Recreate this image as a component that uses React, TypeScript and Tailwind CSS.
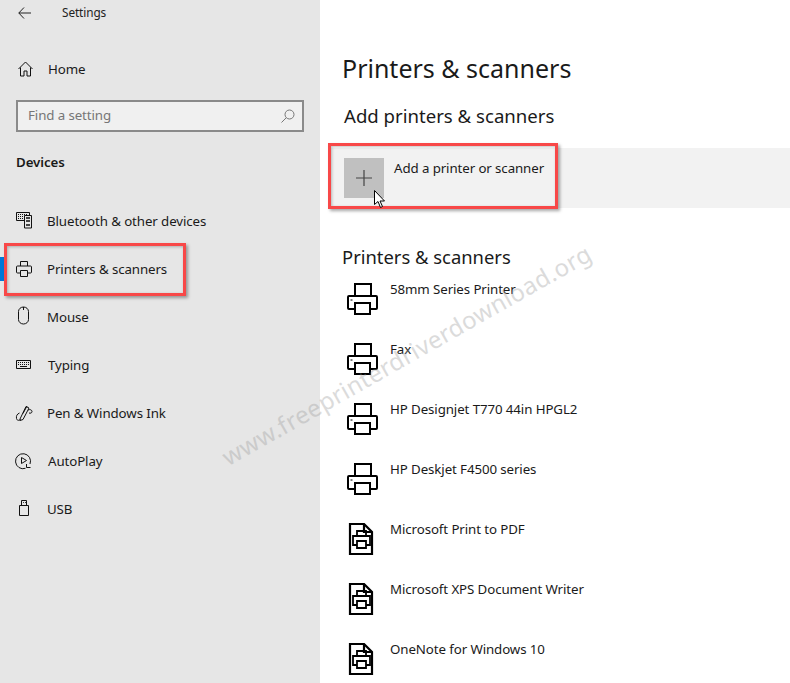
const FONT = "font-['Noto_Sans','Open_Sans',sans-serif]";

function PrinterIcon() {
  return (
    <svg className="mt-2 ml-1 shrink-0" width="32" height="32" viewBox="0 0 32 32" fill="none" stroke="#000" strokeWidth="2">
      <path d="M9 13V1h16v12" />
      <path d="M9 26H3a1 1 0 0 1-1-1V14a1 1 0 0 1 1-1h27a1 1 0 0 1 1 1v11a1 1 0 0 1-1 1h-6" />
      <path d="M9 20h15v11H9z" />
      <path d="M4.5 17h2" strokeWidth="1" />
    </svg>
  );
}

function DocPrinterIcon() {
  return (
    <svg className="mt-2 ml-1 shrink-0" width="32" height="32" viewBox="0 0 32 32" fill="none" stroke="#000" strokeWidth="2.2">
      <path d="M4 1h14l8 8v22H4z" />
      <path d="M18 1v8h8" />
      <path d="M11 13V8h9v5" strokeWidth="1.8" />
      <path d="M11 22H7v-9h17v9h-4" strokeWidth="1.8" />
      <path d="M11 18h9v7h-9z" strokeWidth="1.8" />
    </svg>
  );
}

const navIcons: Record<string, React.ReactNode> = {
  bluetooth: (
    <>
      <path d="M.5-.5h13v8H.5z" />
      <path d="M2 1.500h10M2 3.500h10M2 5.500h6" strokeDasharray="1 1" />
      <path d="M8.500 2.500h7v12.500h-7z" fill="#e6e6e6" />
      <path d="M10 5h4M10 8h4M10 12h4" strokeWidth="2" stroke="#444" />
    </>
  ),
  printer: (
    <>
      <path d="M4.500 5V.5h7V5" />
      <path d="M4 12H1.500a1 1 0 0 1-1-1V6a1 1 0 0 1 1-1h13a1 1 0 0 1 1 1v5a1 1 0 0 1-1 1H12" />
      <path d="M4.500 9.500h7v6h-7z" />
    </>
  ),
  mouse: (
    <>
      <path d="M2.500 2.500a5 4.500 0 0 1 10 0v8a5 4.500 0 0 1-10 0z" />
      <path d="M7.500-2v3" />
    </>
  ),
  keyboard: (
    <>
      <path d="M.5 3.500h14v8h-14z" />
      <path d="M2 5.500h11M2 7.500h11" strokeDasharray="1 1" />
      <path d="M4 9.500h7" />
    </>
  ),
  pen: (
    <>
      <path d="M4 14 10 1.500 13 3 7 14.500 4 15.500z" />
      <path d="M7 8.500 11 1" />
      <path d="M12 5c2-1 4 0 4 1.500s-1.500 2-3 1.500" />
      <path d="M3.500 8C1 9 0 11 .5 13.500s3 2 4 1" />
    </>
  ),
  autoplay: (
    <>
      <path d="M14 11A7.500 7.500 0 1 0 9.500 15.300" />
      <path d="M5.500 4.500v6l5-3z" />
      <path d="M10.500 11v3.500h4" />
    </>
  ),
  usb: (
    <>
      <path d="M3.500 4.500h9v10h-9z" />
      <path d="M5.500 4.500v-5h5v5" />
      <path d="M7 1.500h.8M9 1.500h.8" />
    </>
  ),
};

function NavRow({ icon, label, offset = false, active = false }: { icon: string; label: string; offset?: boolean; active?: boolean }) {
  return (
    <div className="relative flex h-12 items-center pl-4">
      {active && <div className="absolute top-3 left-0 h-6 w-1 bg-[#0078d7]" />}
      <svg className="shrink-0 overflow-visible" width="16" height="16" viewBox="0 0 16 16" fill="none" stroke="#111">
        {navIcons[icon]}
      </svg>
      <span className={`pt-0.5 text-[13.3px] tracking-[-0.1px] text-[#1a1a1a] ${offset ? "ml-4" : "ml-[15px]"}`}>{label}</span>
    </div>
  );
}

const printers = [
  { name: "58mm Series Printer", doc: false },
  { name: "Fax", doc: false },
  { name: "HP Designjet T770 44in HPGL2", doc: false },
  { name: "HP Deskjet F4500 series", doc: false },
  { name: "Microsoft Print to PDF", doc: true },
  { name: "Microsoft XPS Document Writer", doc: true },
  { name: "OneNote for Windows 10", doc: true },
];

export default function App() {
  return (
    <div className={`relative flex h-[683px] w-[790px] overflow-hidden bg-white ${FONT}`}>
      <aside className="w-[320px] shrink-0 bg-[#e6e6e6]">
        <div className="flex h-[26px] items-center pl-[18px]">
          <svg width="13" height="12" viewBox="0 0 13 12" fill="none" stroke="#222">
            <path d="M6 .5.8 6 6 11.500M.8 6H13" />
          </svg>
          <span className="ml-[31px] text-[11.8px] tracking-[-0.1px] text-[#222]">Settings</span>
        </div>
        <div className="mt-[19px] flex h-12 items-center pl-[18px]">
          <svg width="15" height="16" viewBox="0 0 15 16" fill="none" stroke="#111">
            <path d="M.5 8 7.500 1l7 7M2.500 6.500v8.500h3.500v-5h3v5h3.500V6.500" />
          </svg>
          <span className="ml-[15px] pt-0.5 text-[13.3px] tracking-[-0.1px] text-[#1a1a1a]">Home</span>
        </div>
        <div className="mx-4 mt-[7px] flex h-8 items-center justify-between border-2 border-[#8a8a8a] bg-[#f0f0f0] pr-[7px] pl-[10px]">
          <span className="text-[13.3px] tracking-[-0.1px] text-[#767676]">Find a setting</span>
          <svg width="14" height="14" viewBox="0 0 14 14" fill="none" stroke="#777">
            <circle cx="8.500" cy="5.500" r="4.500" />
            <path d="M5.200 8.800.5 13.500" />
          </svg>
        </div>
        <div className="mt-5 h-5 pl-4 text-[13.3px] leading-5 font-semibold tracking-[-0.1px] text-[#1a1a1a]">Devices</div>
        <nav className="mt-[25px]">
          <NavRow icon="bluetooth" label="Bluetooth & other devices" />
          <NavRow icon="printer" label="Printers & scanners" active />
          <NavRow icon="mouse" label="Mouse" />
          <NavRow icon="keyboard" label="Typing" offset />
          <NavRow icon="pen" label="Pen & Windows Ink" />
          <NavRow icon="autoplay" label="AutoPlay" offset />
          <NavRow icon="usb" label="USB" />
        </nav>
      </aside>

      <main className="min-w-0 flex-1">
        <h1 className="mt-12 ml-[22px] h-10 text-[25px] leading-10 text-[#1a1a1a]">Printers &amp; scanners</h1>
        <h2 className="mt-[14px] ml-6 h-7 text-[18.6px] leading-7 text-[#1a1a1a]">Add printers &amp; scanners</h2>
        <div className="mt-[18px] ml-[10px] flex h-[60px] items-start bg-[#f2f2f2] pt-[10px] pl-[14px]">
          <div className="flex h-10 w-10 items-center justify-center bg-[#c0c0c0]">
            <svg width="16" height="16" viewBox="0 0 16 16" stroke="#444" strokeWidth="1.200">
              <path d="M8 0v16M0 8h16" />
            </svg>
          </div>
          <span className="ml-[10px] text-[13.3px] leading-5 tracking-[-0.1px] text-[#1a1a1a]">Add a printer or scanner</span>
        </div>
        <h2 className="mt-[35px] ml-[22px] h-7 text-[18.4px] leading-7 text-[#1a1a1a]">Printers &amp; scanners</h2>
        <ul className="mt-1 ml-[22px]">
          {printers.map((p) => (
            <li key={p.name} className="flex h-[60px] items-start">
              {p.doc ? <DocPrinterIcon /> : <PrinterIcon />}
              <span className="mt-1 ml-3 text-[13.3px] leading-5 tracking-[-0.1px] text-[#1a1a1a]">{p.name}</span>
            </li>
          ))}
        </ul>
      </main>

      {/* red callouts and watermark lie over the page */}
      <div className="absolute top-[243px] left-[4px] h-[53px] w-[182px] border-[3px] border-[#f84848] shadow-[2px_2px_3px_rgba(0,0,0,0.35),inset_1px_1px_3px_rgba(0,0,0,0.25)]" />
      <div className="absolute top-[143px] left-[328px] h-[66px] w-[230px] border-[3px] border-[#f84848] shadow-[2px_2px_3px_rgba(0,0,0,0.35),inset_1px_1px_3px_rgba(0,0,0,0.25)]" />
      <svg className="absolute top-[190px] left-[374px]" width="13" height="20" viewBox="0 0 13 20" fill="#fff" stroke="#000">
        <path d="M.5.5v14l3.500-3 2.500 6 2-1-2.500-5.500h4.500z" />
      </svg>
      <div className="pointer-events-none absolute top-[339px] left-[194px] w-[425px] origin-center -rotate-[29.6deg] text-center text-[24px] leading-8 tracking-[0.4px] whitespace-nowrap text-[#9a9a9a] opacity-35">
        www.freeprinterdriverdownload.org
      </div>
    </div>
  );
}
